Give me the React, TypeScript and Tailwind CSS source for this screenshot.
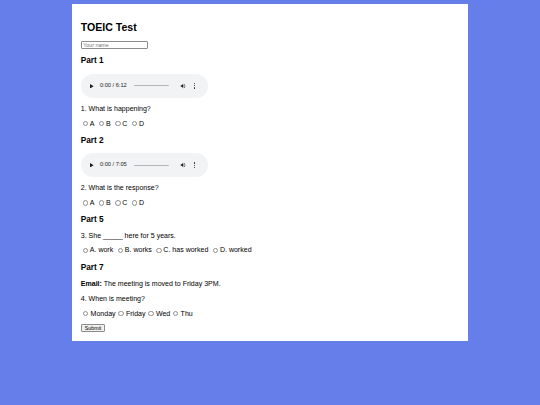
import React from "react";

type Question = {
  part: string;
  audio?: string;
  passage?: React.ReactNode;
  prompt: string;
  options: string[];
  spaced?: boolean;
};

const questions: Question[] = [
  { part: "Part 1", audio: "6:12", prompt: "1. What is happening?", options: ["A", "B", "C", "D"] },
  { part: "Part 2", audio: "7:05", prompt: "2. What is the response?", options: ["A", "B", "C", "D"] },
  {
    part: "Part 5",
    prompt: "3. She _____ here for 5 years.",
    options: ["A. work", "B. works", "C. has worked", "D. worked"],
  },
  {
    part: "Part 7",
    passage: (
      <>
        <b>Email:</b> The meeting is moved to Friday 3PM.
      </>
    ),
    prompt: "4. When is meeting?",
    options: ["Monday", "Friday", "Wed", "Thu"],
    spaced: true,
  },
];

function AudioBar({ duration }: { duration: string }) {
  return (
    <div className="flex items-center w-[127px] h-[24px] rounded-full bg-[#f1f3f4] mt-[8px]">
      {/* play */}
      <svg viewBox="0 0 8 10" className="w-[3.6px] h-[4.5px] ml-[9.5px]">
        <path d="M0 0 L8 5 L0 10 Z" fill="#1f1f1f" />
      </svg>
      <span className="ml-[6px] text-[5.7px] leading-none text-[#1f1f1f]">0:00 / {duration}</span>
      {/* progress */}
      <div className="ml-[7px] w-[35px] h-[1.3px] rounded-full bg-[#b4b7ba]" />
      {/* volume */}
      <svg viewBox="0 0 24 24" className="w-[6px] h-[6px] ml-[11px]">
        <path
          d="M3 9v6h4l5 5V4L7 9H3zm13.5 3A4.5 4.5 0 0 0 14 7.970v8.05c1.48-.73 2.5-2.25 2.5-4.02zM14 3.23v2.06c2.89.86 5 3.54 5 6.71s-2.11 5.850-5 6.71v2.06c4.01-.91 7-4.49 7-8.77s-2.99-7.86-7-8.77z"
          fill="#1f1f1f"
        />
      </svg>
      {/* more */}
      <div className="flex flex-col gap-[1px] ml-[8px]">
        <span className="w-[1.2px] h-[1.2px] rounded-full bg-[#1f1f1f]" />
        <span className="w-[1.2px] h-[1.2px] rounded-full bg-[#1f1f1f]" />
        <span className="w-[1.2px] h-[1.2px] rounded-full bg-[#1f1f1f]" />
      </div>
    </div>
  );
}

function Radio() {
  return <span className="inline-block w-[5.4px] h-[5.4px] rounded-full border-[0.7px] border-[#8f8f8f] bg-white ml-[2px] mr-[1.6px]" />;
}

function Options({ options, spaced }: { options: string[]; spaced?: boolean }) {
  return (
    <div className={`flex items-center h-[7.6px] mt-[7px] ${spaced ? "gap-[0.6px]" : "gap-[2.6px]"}`}>
      {options.map((o) => (
        <label key={o} className="flex items-center">
          <Radio />
          <span className={spaced ? "ml-[0.8px]" : ""}>{o}</span>
        </label>
      ))}
    </div>
  );
}

export default function App() {
  return (
    <div
      className="min-h-screen bg-[#667eea] pt-[4.4px] text-black"
      style={{ fontFamily: '"Liberation Sans", Arial, sans-serif' }}
    >
      <div className="w-[396px] mx-auto bg-white p-[8.8px] text-[7.04px] leading-[8.1px]">
        <h1 className="text-[10.56px] leading-[12.1px] font-bold mt-[7.6px]">TOEIC Test</h1>

        <input
          placeholder="Your name"
          className="block w-[67px] h-[8.2px] mt-[7.8px] px-[1.5px] border-[0.7px] border-[#8c8c8c] rounded-[1px] text-[5.3px] leading-none placeholder:text-[#757575] outline-none"
        />

        {questions.map((q, i) => (
          <section key={q.part}>
            <h3 className={`text-[8.24px] leading-[9.5px] font-bold ${i === 0 ? "mt-[7.4px]" : "mt-[8.24px]"}`}>
              {q.part}
            </h3>
            {q.audio && <AudioBar duration={q.audio} />}
            {q.passage && <p className="mt-[7.6px]">{q.passage}</p>}
            <p className="mt-[7px]">{q.prompt}</p>
            <Options options={q.options} spaced={q.spaced} />
          </section>
        ))}

        <button className="block mt-[7px] px-[3px] h-[7.6px] border-[0.7px] border-[#8c8c8c] rounded-[1px] bg-[#efefef] text-[5.3px] leading-none">
          Submit
        </button>
      </div>
    </div>
  );
}
